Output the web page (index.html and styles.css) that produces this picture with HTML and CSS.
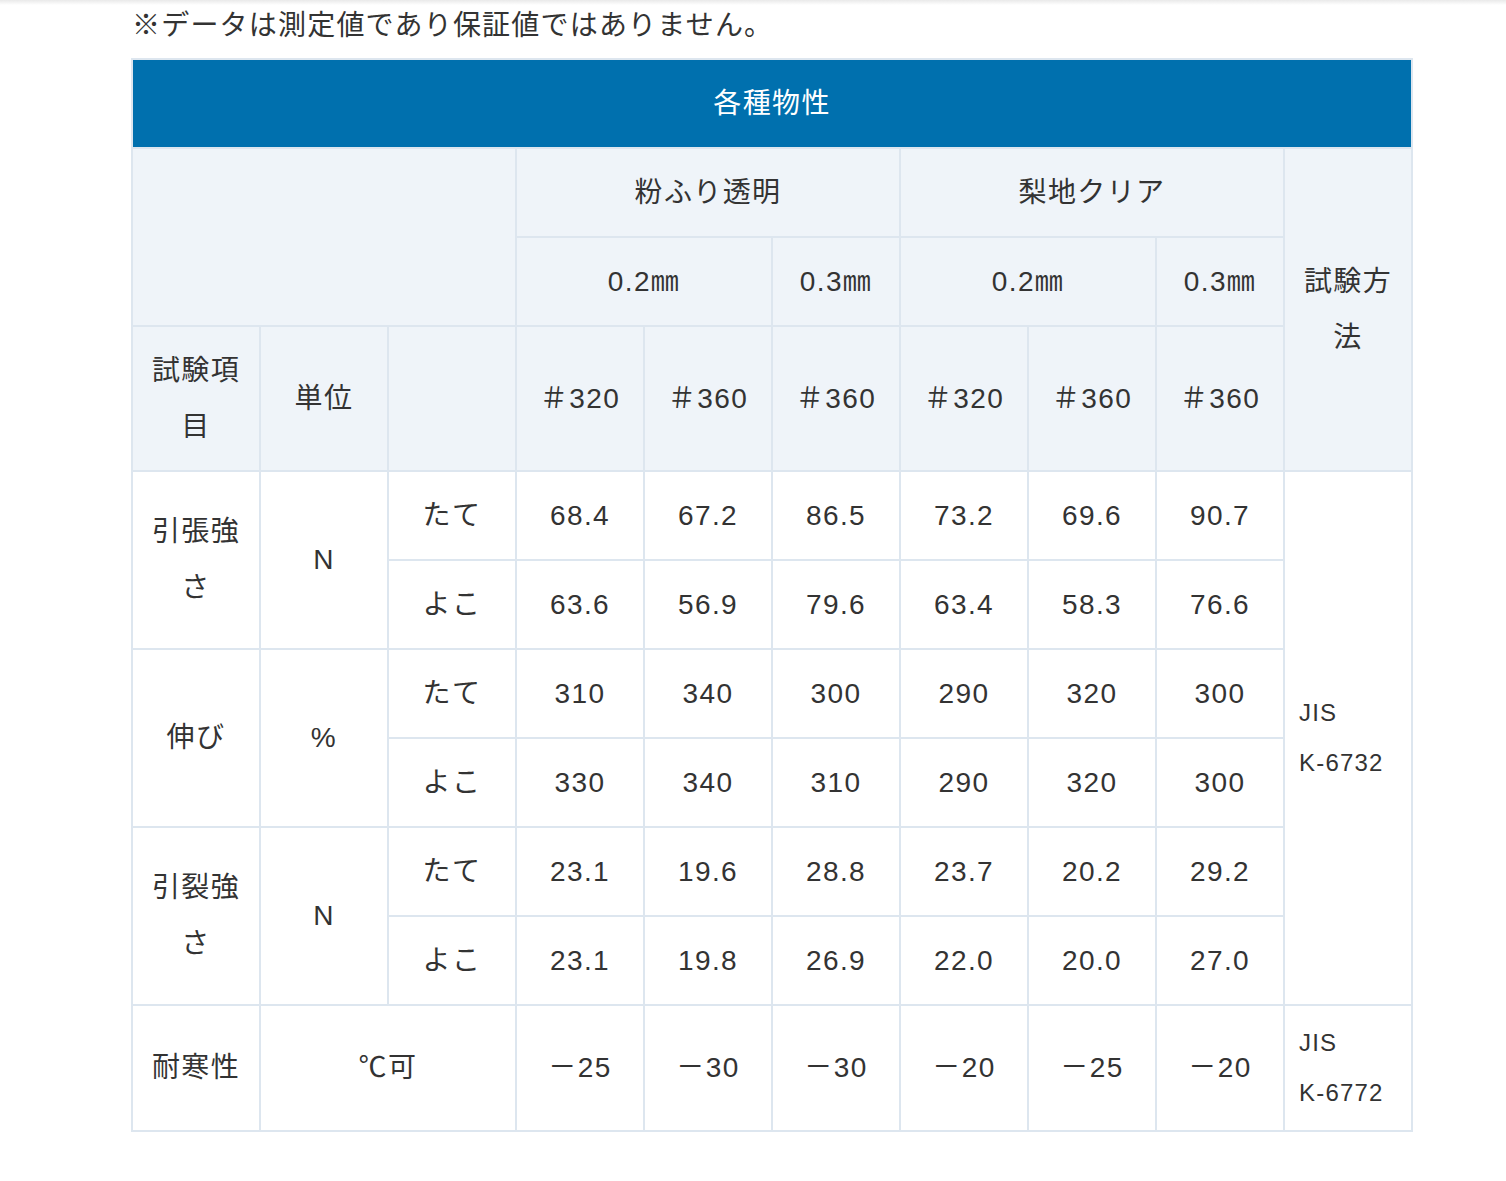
FILE: index.html
```html
<!DOCTYPE html>
<html lang="ja">
<head>
<meta charset="utf-8">
<title>各種物性</title>
<link rel="stylesheet" href="styles.css">
</head>
<body>
<div class="topshade"></div>
<div class="page">
  <p class="note">※データは測定値であり保証値ではありません。</p>
  <table class="spec">
    <colgroup>
      <col><col><col><col><col><col><col><col><col><col>
    </colgroup>
    <thead>
      <tr><th class="title" colspan="10">各種物性</th></tr>
      <tr class="head">
        <td colspan="3" rowspan="2"></td>
        <td colspan="3">粉ふり透明</td>
        <td colspan="3">梨地クリア</td>
        <td rowspan="3">試験方法</td>
      </tr>
      <tr class="head">
        <td colspan="2">0.2㎜</td>
        <td>0.3㎜</td>
        <td colspan="2">0.2㎜</td>
        <td>0.3㎜</td>
      </tr>
      <tr class="head">
        <td>試験項目</td>
        <td>単位</td>
        <td></td>
        <td>＃320</td><td>＃360</td><td>＃360</td>
        <td>＃320</td><td>＃360</td><td>＃360</td>
      </tr>
    </thead>
    <tbody>
      <tr>
        <td rowspan="2">引張強さ</td>
        <td rowspan="2">N</td>
        <td>たて</td>
        <td>68.4</td><td>67.2</td><td>86.5</td><td>73.2</td><td>69.6</td><td>90.7</td>
        <td rowspan="6" class="method">JIS <span class="nw">K-6732</span></td>
      </tr>
      <tr>
        <td>よこ</td>
        <td>63.6</td><td>56.9</td><td>79.6</td><td>63.4</td><td>58.3</td><td>76.6</td>
      </tr>
      <tr>
        <td rowspan="2">伸び</td>
        <td rowspan="2">%</td>
        <td>たて</td>
        <td>310</td><td>340</td><td>300</td><td>290</td><td>320</td><td>300</td>
      </tr>
      <tr>
        <td>よこ</td>
        <td>330</td><td>340</td><td>310</td><td>290</td><td>320</td><td>300</td>
      </tr>
      <tr>
        <td rowspan="2">引裂強さ</td>
        <td rowspan="2">N</td>
        <td>たて</td>
        <td>23.1</td><td>19.6</td><td>28.8</td><td>23.7</td><td>20.2</td><td>29.2</td>
      </tr>
      <tr>
        <td>よこ</td>
        <td>23.1</td><td>19.8</td><td>26.9</td><td>22.0</td><td>20.0</td><td>27.0</td>
      </tr>
      <tr class="last">
        <td>耐寒性</td>
        <td colspan="2">℃可</td>
        <td>－25</td><td>－30</td><td>－30</td><td>－20</td><td>－25</td><td>－20</td>
        <td class="method">JIS <span class="nw">K-6772</span></td>
      </tr>
    </tbody>
  </table>
</div>
</body>
</html>
```
FILE: styles.css
```css
html, body {
  margin: 0;
  padding: 0;
  background: #ffffff;
}
body {
  font-family: "Liberation Sans", "Noto Sans CJK JP", sans-serif;
  color: #333333;
}
.topshade {
  height: 5px;
  background: linear-gradient(#e9e9e9, #ffffff);
}
.page {
  padding: 0 0 40px 131px;
}
.note {
  margin: 0 0 11px 1px;
  font-size: 28px;
  line-height: 42px;
  letter-spacing: 1.2px;
  color: #333333;
}
.spec {
  border-collapse: collapse;
  table-layout: fixed;
  width: 1280px;
  font-size: 28px;
  letter-spacing: 0.05em;
}
.spec col {
  width: 128px;
}
.spec th,
.spec td {
  border: 2px solid #dde6ef;
  padding: 15.5px 14px;
  line-height: 56px;
  text-align: center;
  vertical-align: middle;
  font-weight: normal;
}
.spec .title {
  background: #0070ae;
  color: #ffffff;
  border-color: #dde6ef;
}
.spec .head td {
  background: #eff4f9;
}
.spec tbody td {
  background: #ffffff;
}
.spec .method {
  text-align: left;
  font-size: 24px;
  line-height: 50px;
  letter-spacing: 0.05em;
}
.spec .nw {
  white-space: nowrap;
}
.spec .last td {
  padding-top: 12px;
  padding-bottom: 12px;
}
```
